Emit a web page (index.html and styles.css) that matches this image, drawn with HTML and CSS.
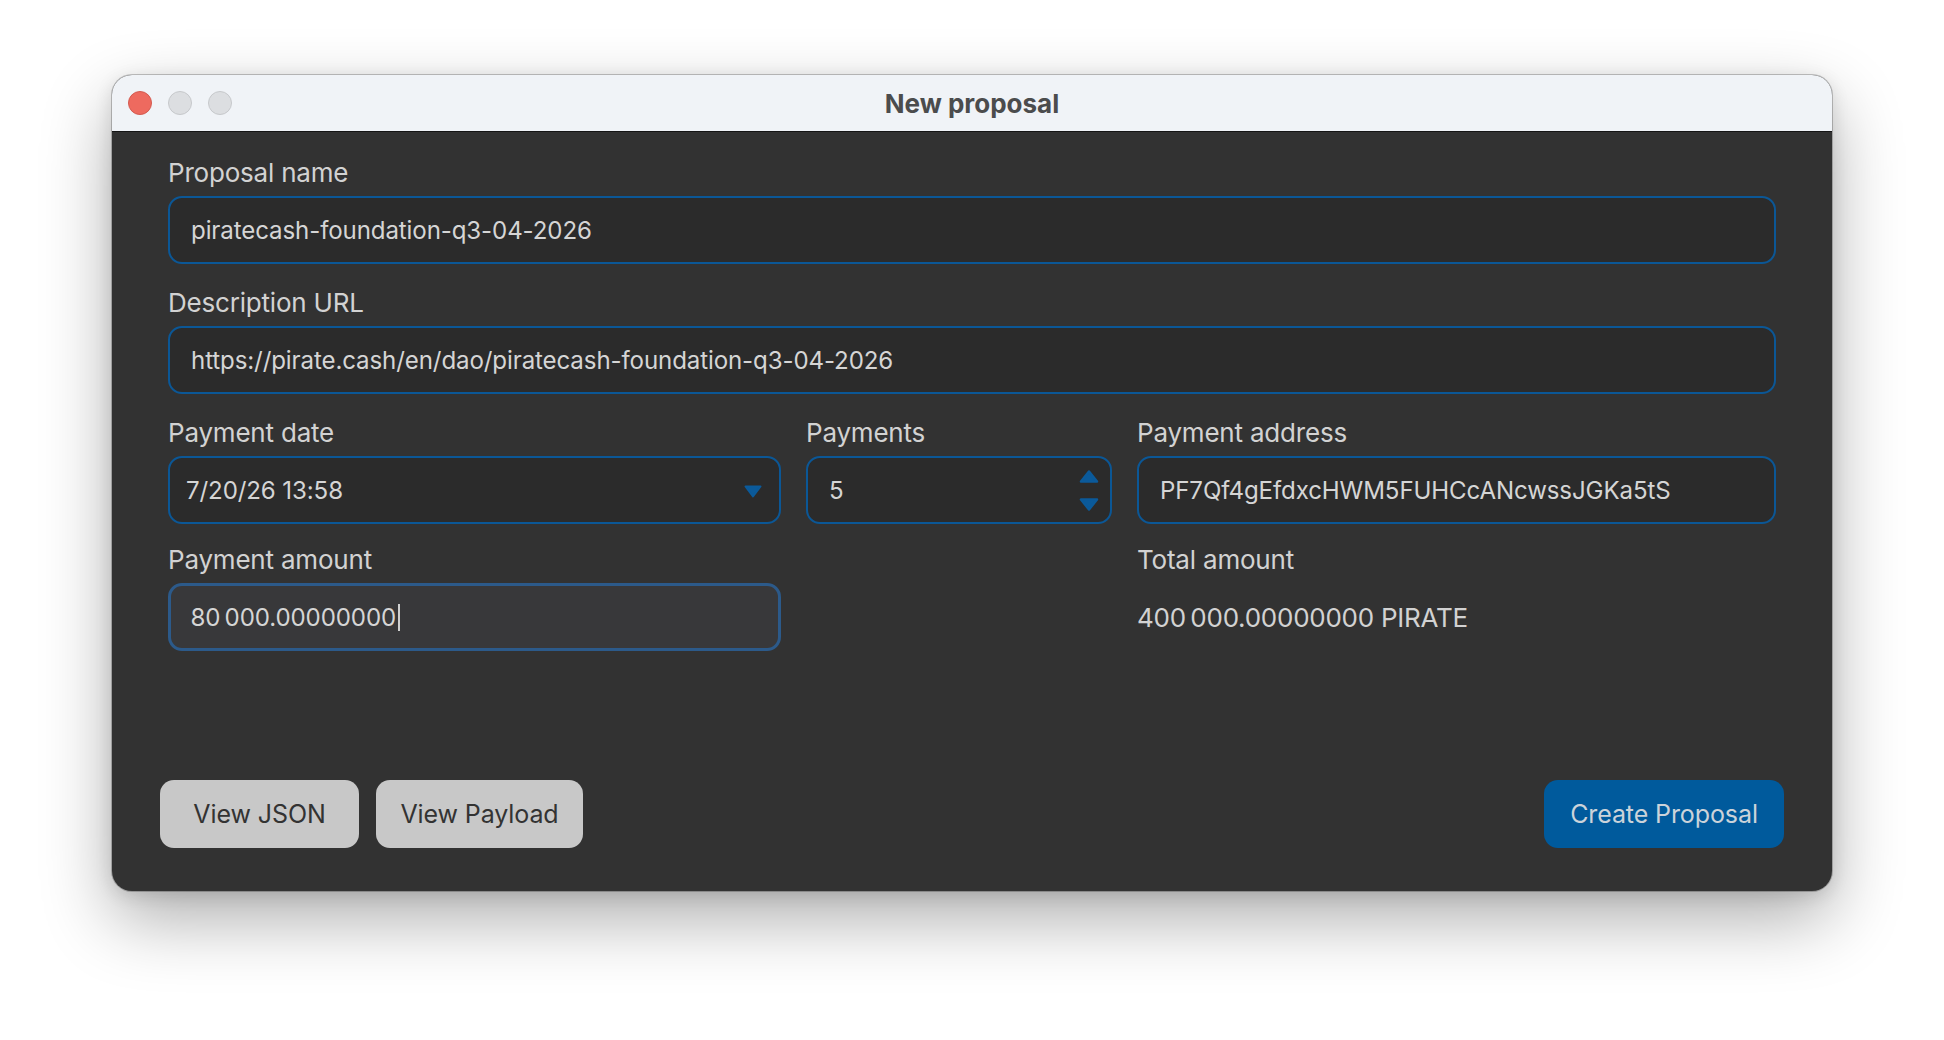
FILE: index.html
```html
<!DOCTYPE html>
<html>
<head>
<meta charset="utf-8">
<link rel="stylesheet" href="styles.css">
</head>
<body>
<div class="window">
  <div class="titlebar">
    <div class="lights">
      <span class="light red"></span>
      <span class="light gray"></span>
      <span class="light gray"></span>
    </div>
    <div class="title">New proposal</div>
    <div></div>
  </div>
  <div class="content">
    <div class="form">
      <div class="field full">
        <div class="label">Proposal name</div>
        <div class="input"><span class="value">piratecash-foundation-q3-04-2026</span></div>
      </div>
      <div class="field full">
        <div class="label">Description URL</div>
        <div class="input"><span class="value">https://pirate.cash/en/dao/piratecash-foundation-q3-04-2026</span></div>
      </div>
      <div class="grid">
        <div class="field">
          <div class="label">Payment date</div>
          <div class="input combo"><span class="value">7/20/26 13:58</span>
            <svg class="arrow" width="18" height="13" viewBox="0 0 18 13"><path d="M1.5 1.5 H16.5 L9 11.5 Z" fill="#0b5a9a" stroke="#0b5a9a" stroke-width="2" stroke-linejoin="round"/></svg>
          </div>
        </div>
        <div class="field">
          <div class="label">Payments</div>
          <div class="input spin"><span class="value">5</span>
            <div class="spinner">
              <svg width="20" height="13" viewBox="0 0 20 13"><path d="M2 11.5 H18 L10 1.5 Z" fill="#0b5a9a" stroke="#0b5a9a" stroke-width="2.5" stroke-linejoin="round"/></svg>
              <svg width="20" height="13" viewBox="0 0 20 13"><path d="M2 1.5 H18 L10 11.5 Z" fill="#0b5a9a" stroke="#0b5a9a" stroke-width="2.5" stroke-linejoin="round"/></svg>
            </div>
          </div>
        </div>
        <div class="field">
          <div class="label">Payment address</div>
          <div class="input"><span class="value">PF7Qf4gEfdxcHWM5FUHCcANcwssJGKa5tS</span></div>
        </div>
        <div class="field row4">
          <div class="label">Payment amount</div>
          <div class="input focused"><span class="value">80&#8201;000.00000000</span><span class="caret"></span></div>
        </div>
        <div class="field row4 col3">
          <div class="label">Total amount</div>
          <div class="total">400&#8201;000.00000000 PIRATE</div>
        </div>
      </div>
    </div>
    <div class="buttons">
      <div class="left">
        <div class="btn light-btn btn-json">View JSON</div>
        <div class="btn light-btn btn-payload">View Payload</div>
      </div>
      <div class="btn primary">Create Proposal</div>
    </div>
  </div>
</div>
</body>
</html>
```
FILE: styles.css
```css
html, body {
  margin: 0;
  padding: 0;
  background: #ffffff;
  width: 1944px;
  height: 1040px;
  overflow: hidden;
}
body {
  font-family: Inter, "Noto Sans", sans-serif;
  font-size: 26px;
}
.window {
  margin: 75px 0 0 112px;
  width: 1720px;
  height: 816px;
  border-radius: 20px;
  overflow: hidden;
  box-shadow: 0 0 0 1px rgba(0,0,0,0.22), 0 28px 70px rgba(0,0,0,0.32), 0 4px 18px rgba(0,0,0,0.12);
  display: flex;
  flex-direction: column;
  background: #323232;
}
.titlebar {
  height: 56px;
  flex: none;
  background: #f0f3f7;
  border-bottom: 1px solid #151515;
  display: grid;
  grid-template-columns: 1fr auto 1fr;
  align-items: center;
}
.lights {
  display: flex;
  gap: 16px;
  padding-left: 16px;
}
.light {
  width: 24px;
  height: 24px;
  border-radius: 50%;
  box-sizing: border-box;
}
.light.red {
  background: #ee6a5f;
  border: 1px solid #d35a50;
}
.light.gray {
  background: #dcdee1;
  border: 1px solid #c6c8cb;
}
.title {
  font-weight: 700;
  font-size: 26px;
  color: #4b4c4d;
  letter-spacing: 0;
}
.content {
  flex: 1;
  display: flex;
  flex-direction: column;
  justify-content: space-between;
  padding: 24px 48px 43px 48px;
}
.form {
  display: flex;
  flex-direction: column;
  gap: 22px;
  padding: 0 8px;
}
.field {
  display: flex;
  flex-direction: column;
  gap: 8px;
}
.label {
  line-height: 34px;
  height: 32px;
  color: #d2d2d2;
  letter-spacing: -0.2px;
}
.input {
  height: 68px;
  box-sizing: border-box;
  border: 2px solid #0b5796;
  border-radius: 14px;
  background: #2b2b2b;
  display: flex;
  align-items: center;
  padding-left: 21px;
  color: #d5d5d5;
  font-size: 24.1px;
  letter-spacing: -0.12px;
}
.input .value {
  white-space: nowrap;
}
.combo {
  padding-left: 16px;
  justify-content: space-between;
  padding-right: 17px;
}
.combo .arrow {
  margin-top: 2px;
}
.spin {
  justify-content: space-between;
  padding-right: 11px;
}
.spinner {
  display: flex;
  flex-direction: column;
  gap: 15px;
}
.spinner svg {
  display: block;
}
.grid {
  display: grid;
  grid-template-columns: 613px 306px 1fr;
  column-gap: 25px;
  row-gap: 19px;
}
.col3 {
  grid-column: 3;
}
.focused {
  border: 3.5px solid #2c5a8a;
  background: #38383a;
  padding-left: 19.5px;
}
.caret {
  width: 2px;
  height: 27px;
  background: #d0d0d0;
  margin-left: 2px;
}
.total {
  height: 68px;
  display: flex;
  align-items: center;
  color: #d2d2d2;
  letter-spacing: -0.25px;
}
.buttons {
  display: flex;
  justify-content: space-between;
  align-items: center;
}
.left {
  display: flex;
  gap: 17px;
}
.btn {
  height: 68px;
  border-radius: 14px;
  display: flex;
  align-items: center;
  justify-content: center;
  box-sizing: border-box;
  font-size: 25px;
  letter-spacing: -0.1px;
}
.light-btn {
  background: #c8c8c8;
  color: #333333;
}
.btn-json { width: 199px; }
.btn-payload { width: 207px; }
.primary {
  width: 240px;
  background: #005a9c;
  color: #cbd3da;
}
```
